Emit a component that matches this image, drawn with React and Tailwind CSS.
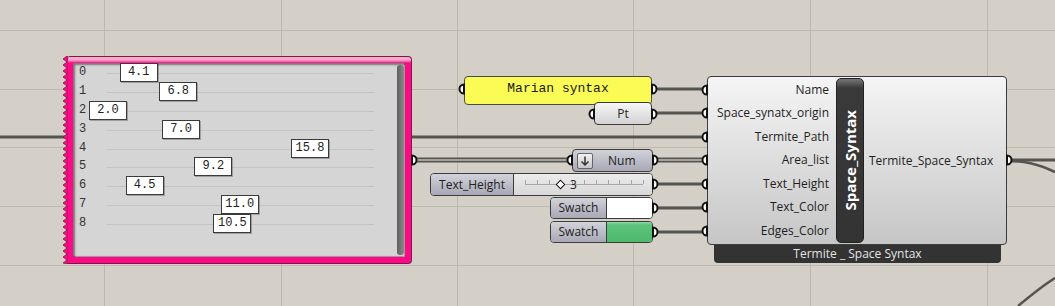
import React from 'react'

const values = [4.1, 6.8, 2.0, 7.0, 15.8, 9.2, 4.5, 11.0, 10.5]
const inputs = ['Name', 'Space_synatx_origin', 'Termite_Path', 'Area_list', 'Text_Height', 'Text_Color', 'Edges_Color']

const sans = 'font-["Open_Sans","Noto_Sans",sans-serif]'
const mono = 'font-["Liberation_Mono","Courier_New",monospace]'

function Grid() {
  const xs = [104, 281, 457, 633, 810, 987]
  const ys = [30, 89, 147, 206, 265]
  return (
    <svg className="absolute inset-0" width="1055" height="306">
      {xs.map((x) => (
        <line key={x} x1={x + 0.5} y1="0" x2={x + 0.5} y2="306" stroke="#bdb9b1" strokeWidth="1" />
      ))}
      {ys.map((y) => (
        <line key={y} x1="0" y1={y + 0.5} x2="1055" y2={y + 0.5} stroke="#bdb9b1" strokeWidth="1" />
      ))}
    </svg>
  )
}

function Wires() {
  const single = [
    [0, 137, 707, 137],
    [652, 89, 707, 89],
    [652, 113, 707, 113],
    [653, 184, 707, 184],
    [653, 208, 707, 208],
    [653, 232, 707, 232],
    [1007, 160, 1055, 160],
  ]
  const double = [
    [412, 160, 572, 160],
    [653, 160, 707, 160],
  ]
  return (
    <svg className="absolute inset-0" width="1055" height="306">
      {single.map(([a, b, c, d]) => (
        <line key={`${a}-${b}`} x1={a} y1={b} x2={c} y2={d} stroke="#55554f" strokeWidth="3" />
      ))}
      {double.map(([a, b, c, d]) => (
        <g key={`${a}-${b}`}>
          <line x1={a} y1={b} x2={c} y2={d} stroke="#55554f" strokeWidth="5" />
          <line x1={a} y1={b} x2={c} y2={d} stroke="#bfbcb5" strokeWidth="1.5" />
        </g>
      ))}
      <path d="M1007 161 C1025 161 1038 164 1055 172" fill="none" stroke="#55554f" strokeWidth="2.5" />
      <path d="M1018 306 C1030 296 1042 286 1055 278" fill="none" stroke="#55554f" strokeWidth="2.5" />
    </svg>
  )
}

function Grips() {
  const outs = [
    [412, 160],
    [652, 89],
    [652, 114],
    [653, 160],
    [653, 184],
    [653, 208],
    [653, 232],
    [1007, 160],
  ]
  const ins = [
    [464, 89],
    [594, 114],
    [572, 160],
    ...[90, 113, 137, 160, 184, 207, 231].map((y) => [707, y]),
  ]
  return (
    <svg className="pointer-events-none absolute inset-0" width="1055" height="306">
      {outs.map(([x, y]) => (
        <path
          key={`o${x}-${y}`}
          d={`M${x} ${y - 4.5} A4.5 4.5 0 0 1 ${x} ${y + 4.5} Z`}
          fill="#fff"
          stroke="#111"
          strokeWidth="2"
        />
      ))}
      {ins.map(([x, y]) => (
        <path
          key={`i${x}-${y}`}
          d={`M${x} ${y - 4.5} A4.5 4.5 0 0 0 ${x} ${y + 4.5} Z`}
          fill="#fff"
          stroke="#111"
          strokeWidth="2"
        />
      ))}
    </svg>
  )
}

function Zigzag() {
  const pts = []
  for (let y = 0; y <= 208; y += 3) {
    pts.push(`${(y / 3) % 2 === 0 ? 5 : 1},${y}`)
  }
  return (
    <svg width="6" height="208" className="shrink-0">
      <polygon points={`6,0 ${pts.join(' ')} 6,208`} fill="#ff0a86" stroke="#7a1a48" strokeWidth="0.8" />
    </svg>
  )
}

function GraphPanel() {
  return (
    <div className="absolute left-[62px] top-[56px] flex h-[208px] w-[350px]">
      <Zigzag />
      <div className="flex-1 rounded-r-[4px] rounded-tl-[2px] border border-l-0 border-[#7a1a48] bg-[linear-gradient(to_bottom,#f7a9cc_0px,#f7a9cc_3px,#ff0a86_6px)] pb-[6px] pl-[5px] pr-[6px] pt-[6px]">
        <div className="flex h-full bg-[#d5d5d5] shadow-[inset_2px_2px_2px_rgba(0,0,0,0.45),inset_-1px_-1px_1px_rgba(0,0,0,0.3)]">
          <div className="flex-1">
            {values.map((v, i) => (
              <div key={i} className="relative h-[18.9px]">
                <span className={`absolute left-[6px] top-[1px] text-[12px] leading-[16px] text-[#333] ${mono}`}>{i}</span>
                <div className="absolute left-[34px] top-[10px] h-px w-[267px] bg-[#c4c4c4]" />
                <div
                  className={`absolute top-0 flex h-[19px] w-[38px] justify-center border border-[#3a3a3a] bg-white pt-[1px] text-[12px] leading-[14px] text-[#222] shadow-[1px_1px_0_rgba(0,0,0,0.25)] ${mono}`}
                  style={{ left: `${-13.3 + v * 14.64}px` }}
                >
                  {v.toFixed(1)}
                </div>
              </div>
            ))}
          </div>
          <div className="py-[2px] pr-[1px]">
            <div className="h-full w-[7px] rounded-[3px] bg-[linear-gradient(to_right,#5e5e5e,#8a8a8a)]" />
          </div>
        </div>
      </div>
    </div>
  )
}

const purple = 'bg-[linear-gradient(to_bottom,#d2d2da,#a8a8b6)]'

function Params() {
  return (
    <>
      <div className={`absolute left-[464px] top-[76px] flex h-[29px] w-[188px] items-center justify-center rounded-[4px] border border-[#4a4a4a] bg-[#fbfb55] pb-[4px] text-[13px] text-[#1a1a1a] ${mono}`}>
        Marian syntax
      </div>
      <div className={`absolute left-[594px] top-[102px] flex h-[23px] w-[58px] items-center justify-center rounded-[4px] border border-[#3c3c3c] bg-[linear-gradient(to_bottom,#f6f6f6,#d2d2d2)] text-[12px] text-[#222] ${sans}`}>
        Pt
      </div>
      <div className={`absolute left-[572px] top-[149px] flex h-[23px] w-[81px] items-center gap-[15px] rounded-[4px] border border-[#3c3c3c] pl-[4px] text-[12px] text-[#222] ${purple} ${sans}`}>
        <div className="flex h-[16px] w-[16px] items-center justify-center rounded-[2px] border border-[#666] bg-[linear-gradient(to_bottom,#f2f2f2,#c6c6c6)]">
          <svg width="12" height="12" viewBox="0 0 12 12">
            <path d="M6 1.5 V10 M2.5 6.5 L6 10 L9.5 6.5" fill="none" stroke="#333" strokeWidth="1.5" />
          </svg>
        </div>
        <span>Num</span>
      </div>
      <div className={`absolute left-[430px] top-[173px] flex h-[23px] w-[223px] overflow-hidden rounded-[4px] border border-[#3c3c3c] text-[12px] text-[#222] ${sans}`}>
        <div className={`flex w-[83px] items-center justify-center border-r border-[#3c3c3c] ${purple}`}>Text_Height</div>
        <div className="relative flex flex-1 items-center bg-[linear-gradient(to_bottom,#ececec,#d8d8d8)] pl-[43px]">
          <svg className="absolute left-0 top-0" width="140" height="22">
            <line x1="11" y1="10.5" x2="129" y2="10.5" stroke="#a6a6a6" strokeWidth="1" />
            {Array.from({ length: 11 }, (_, i) => 11 + i * 11.8).map((x) => (
              <line key={x} x1={Math.round(x) + 0.5} y1="6" x2={Math.round(x) + 0.5} y2="10" stroke="#a6a6a6" strokeWidth="1" />
            ))}
          </svg>
          <div className="relative h-[7px] w-[7px] rotate-45 border-[1.5px] border-[#111] bg-white" />
          <span className="relative ml-[6px]">3</span>
        </div>
      </div>
      {['#ffffff', 'linear'].map((c, i) => (
        <div
          key={c}
          className={`absolute left-[550px] flex h-[22px] w-[103px] overflow-hidden rounded-[4px] border border-[#3c3c3c] text-[12px] text-[#222] ${sans} ${i === 0 ? 'top-[197px]' : 'top-[221px]'}`}
        >
          <div className={`flex w-[56px] items-center justify-center border-r border-[#3c3c3c] ${purple}`}>Swatch</div>
          <div className={`flex-1 ${i === 0 ? 'bg-white' : 'bg-[linear-gradient(to_bottom,#8fd9a4_0px,#5cc37b_3px,#4db96c)]'}`} />
        </div>
      ))}
    </>
  )
}

function TermiteNode() {
  return (
    <div className={`absolute left-[707px] top-[76px] flex w-[300px] flex-col ${sans}`}>
      <div className="flex h-[169px] rounded-[4px] border border-[#3c3c3c] bg-[linear-gradient(to_bottom,#f5f5f5,#c6c6c6)] py-[1px]">
        <div className="flex w-[128px] flex-col items-end pr-[7px]">
          {inputs.map((name) => (
            <div key={name} className="flex h-[23.5px] items-center text-[12px] text-[#1e1e1e]">
              {name}
            </div>
          ))}
        </div>
        <div className="flex w-[28px] items-center justify-center rounded-[5px] border border-[#222] bg-[linear-gradient(to_bottom,#777_0px,#3a3a3a_9px,#333)]">
          <span className="rotate-180 text-[15px] font-bold text-white [writing-mode:vertical-rl]">Space_Syntax</span>
        </div>
        <div className="flex flex-1 items-center pl-[5px] text-[12px] text-[#1e1e1e]">Termite_Space_Syntax</div>
      </div>
      <div className="ml-[7px] mr-[6px] flex h-[18px] items-center justify-center rounded-b-[4px] bg-[#333] text-[12px] text-[#e4e4e4]">
        Termite _ Space Syntax
      </div>
    </div>
  )
}

export default function App() {
  return (
    <div className="relative h-[306px] w-[1055px] overflow-hidden bg-[#d4d0c8]">
      <Grid />
      <Wires />
      <GraphPanel />
      <Params />
      <TermiteNode />
      <Grips />
    </div>
  )
}
